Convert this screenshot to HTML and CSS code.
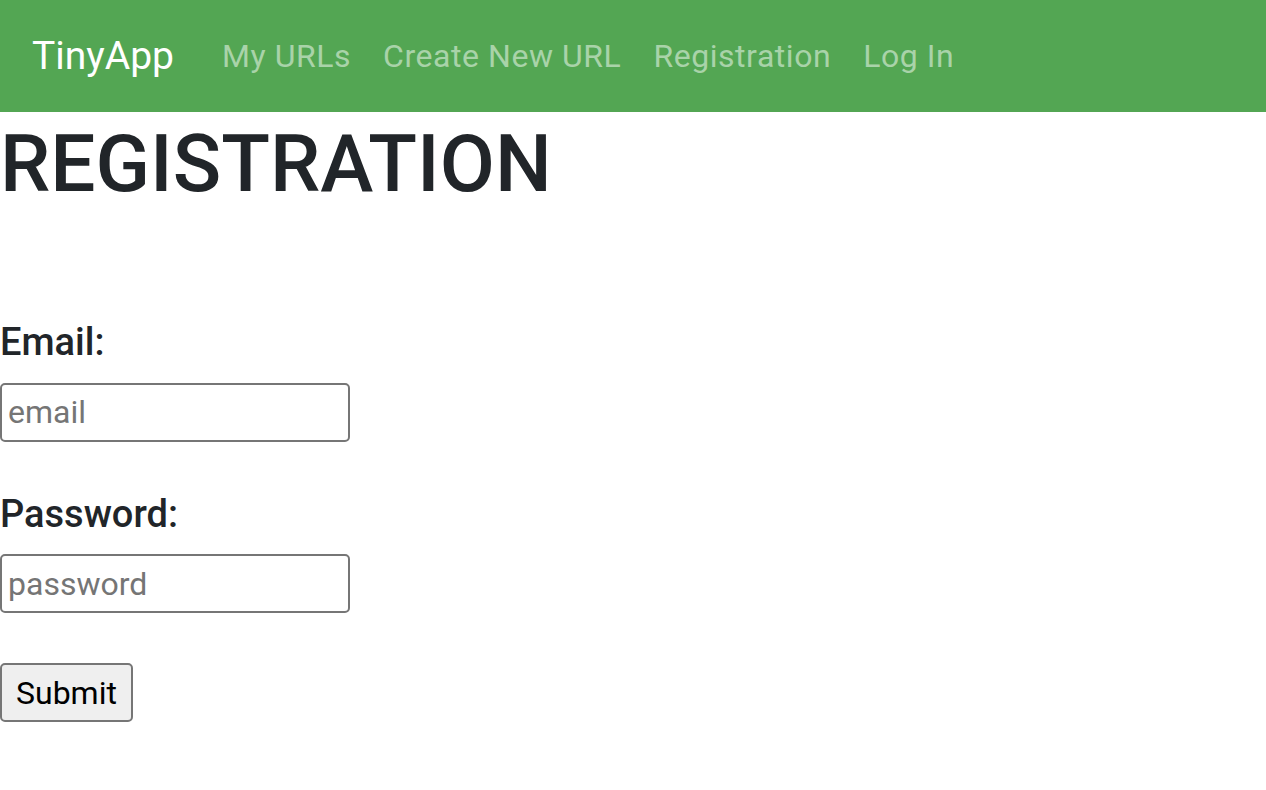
FILE: index.html
```html
<!DOCTYPE html>
<html lang="en">
<head>
<meta charset="utf-8">
<title>TinyApp - Registration</title>
<link rel="stylesheet" href="styles.css">
</head>
<body>
  <nav class="navbar">
    <a class="brand" href="#">TinyApp</a>
    <ul class="nav-links">
      <li><a class="nav-link" href="#">My URLs</a></li>
      <li><a class="nav-link" href="#">Create New URL</a></li>
      <li><a class="nav-link" href="#">Registration</a></li>
      <li><a class="nav-link" href="#">Log In</a></li>
    </ul>
  </nav>
  <main class="content">
    <h1 class="title">REGISTRATION</h1>
    <form class="form">
      <div class="field">
        <label class="label" for="email">Email:</label>
        <input class="input" id="email" type="email" placeholder="email">
      </div>
      <div class="field">
        <label class="label" for="password">Password:</label>
        <input class="input" id="password" type="password" placeholder="password">
      </div>
      <button class="submit" type="submit">Submit</button>
    </form>
  </main>
</body>
</html>
```
FILE: styles.css
```css
* { box-sizing: border-box; }
html, body { margin: 0; padding: 0; background: #fff; }
body {
  font-family: Roboto, "Liberation Sans", Arial, sans-serif;
  color: #212529;
}
.navbar {
  display: flex;
  align-items: center;
  height: 112px;
  padding: 0 32px;
  background: #53a653;
}
.brand {
  font-size: 39px;
  line-height: 1.2;
  color: #fff;
  text-decoration: none;
  margin-right: 32px;
}
.nav-links {
  display: flex;
  list-style: none;
  margin: 0;
  padding: 0;
}
.nav-link {
  display: block;
  padding: 0 16px;
  font-size: 32px;
  line-height: 1.5;
  letter-spacing: 0.55px;
  color: #a9d3a9;
  text-decoration: none;
}
.content { padding: 0; }
.title {
  margin: 0;
  font-size: 80px;
  font-weight: 500;
  line-height: 1.3;
  color: #212529;
}
.form {
  display: flex;
  flex-direction: column;
  align-items: flex-start;
  margin-top: 104px;
}
.field {
  display: flex;
  flex-direction: column;
  align-items: flex-start;
  margin-bottom: 50px;
}
.label {
  font-size: 38px;
  font-weight: 500;
  line-height: 1.2;
  margin-bottom: 17px;
}
.input {
  width: 350px;
  height: 59px;
  margin: 0;
  padding: 2px 6px;
  border: 2px solid #767676;
  border-radius: 5px;
  font-family: inherit;
  font-size: 32px;
  color: #212529;
  background: #fff;
}
.input::placeholder { color: #757575; }
.submit {
  height: 59px;
  margin: 0;
  padding: 0 14px;
  border: 2px solid #767676;
  border-radius: 5px;
  background: #efefef;
  font-family: inherit;
  font-size: 32px;
  color: #000;
}
```
